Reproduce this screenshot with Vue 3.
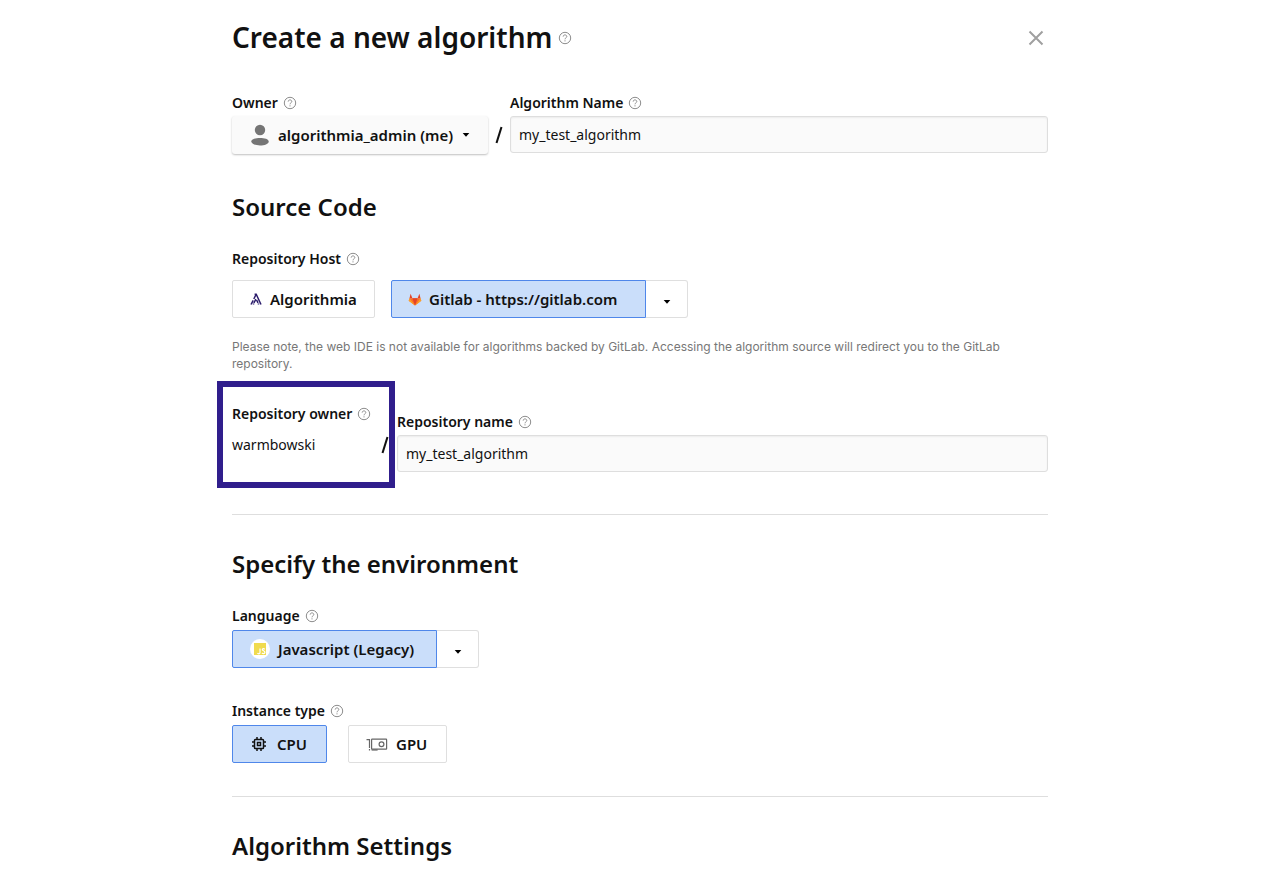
<script setup>
import { h, ref } from 'vue'

const algorithmName = ref('my_test_algorithm')
const repositoryName = ref('my_test_algorithm')
const host = ref('gitlab')
const instance = ref('cpu')

const HelpIcon = () =>
  h('svg', { viewBox: '0 0 14 14', width: 14, height: 14, fill: 'none', stroke: '#8d8d8d', 'stroke-width': 1, 'aria-hidden': 'true' }, [
    h('circle', { cx: 7, cy: 7, r: 5.7 }),
    h('path', { d: 'M5.2 5.6C5.2 4.5 6 3.9 7 3.9s1.8.7 1.8 1.6c0 1.3-1.8 1.3-1.8 2.8' }),
    h('path', { d: 'M7 9.3v1.1' })
  ])

const Caret = () =>
  h('svg', { viewBox: '0 0 8 4', width: 8, height: 4, 'aria-hidden': 'true' }, [
    h('path', { d: 'M.7 0h6.6L4 3.8z', fill: '#000' })
  ])
</script>

<template>
  <main class="page">
    <form class="form" @submit.prevent>
      <header class="header">
        <h1>Create a new algorithm</h1>
        <button type="button" class="help" aria-label="About algorithms"><HelpIcon /></button>
        <button type="button" class="close" aria-label="Close">
          <svg viewBox="0 0 16 16" width="16" height="16" fill="none" stroke="#a0a0a0" stroke-width="2">
            <path d="M1.5 1.5l13 13M14.5 1.5l-13 13" />
          </svg>
        </button>
      </header>

      <div class="row identity">
        <div class="field">
          <div class="caption">
            <label for="owner">Owner</label>
            <button type="button" class="help" aria-label="About owner"><HelpIcon /></button>
          </div>
          <button id="owner" type="button" class="owner">
            <svg viewBox="0 0 18 22" width="18" height="22" fill="#757575">
              <circle cx="9" cy="6" r="5.2" />
              <path d="M.3 17.5C.3 15 4.6 14 9 14s8.7 1 8.7 3.5S13.4 21.500 9 21.500.3 19.800.3 17.500z" />
            </svg>
            <span>algorithmia_admin (me)</span>
            <Caret />
          </button>
        </div>
        <svg class="slash" viewBox="0 0 8 18" width="8" height="18" fill="none" stroke="#111" stroke-width="2" aria-hidden="true">
          <path d="M6.5 1L1.5 17" />
        </svg>
        <div class="field grow">
          <div class="caption">
            <label for="algorithm-name">Algorithm Name</label>
            <button type="button" class="help" aria-label="About algorithm name"><HelpIcon /></button>
          </div>
          <input id="algorithm-name" v-model="algorithmName" type="text">
        </div>
      </div>

      <h2>Source Code</h2>
      <div class="caption">
        <span id="host-label">Repository Host</span>
        <button type="button" class="help" aria-label="About repository host"><HelpIcon /></button>
      </div>
      <div class="choices hosts" role="group" aria-labelledby="host-label">
        <button type="button" class="choice algorithmia" :class="{ selected: host === 'algorithmia' }" @click="host = 'algorithmia'">
          <svg viewBox="0 0 12 12" width="12" height="12" fill="none" stroke="#2b1c6b" stroke-width="1.5">
            <path d="M4.600 1.200h1.600L11 11.500M6 1.500L3.800 6M3.200 7.300L1 11.500M5.900 6.200L3.900 10M6.600 7L8 9.800M8.500 10.600v1M3.500 10.600v1" />
          </svg>
          <span>Algorithmia</span>
        </button>
        <div class="split">
          <button type="button" class="choice gitlab" :class="{ selected: host === 'gitlab' }" @click="host = 'gitlab'">
            <svg viewBox="0 0 14 13" width="14" height="13">
              <path d="M7 12.500L.7 7.800 1.500 5.300h11l.8 2.500z" fill="#fc6d26" />
              <path d="M.7 7.800l.8-2.500L7 12.500zM13.300 7.800l-.8-2.500L7 12.500z" fill="#fca326" />
              <path d="M1.500 5.300L2.600.8l1.800 4.500zM12.500 5.300L11.400.8 9.600 5.300zM4.400 5.300h5.200L7 12.500z" fill="#e24329" />
            </svg>
            <span>Gitlab - https://gitlab.com</span>
          </button>
          <button type="button" class="more" aria-label="Choose repository host"><Caret /></button>
        </div>
      </div>
      <p class="note">
        Please note, the web IDE is not available for algorithms backed by GitLab. Accessing the algorithm source will redirect you to the GitLab repository.
      </p>

      <div class="row repository">
        <div class="repo-owner">
          <div class="caption">
            <span>Repository owner</span>
            <button type="button" class="help" aria-label="About repository owner"><HelpIcon /></button>
          </div>
          <div class="owner-line">
            <span>warmbowski</span>
            <svg viewBox="0 0 8 18" width="8" height="18" fill="none" stroke="#111" stroke-width="2" aria-hidden="true">
              <path d="M6.5 1L1.5 17" />
            </svg>
          </div>
          <div class="highlight"></div>
        </div>
        <div class="field grow repo-name">
          <div class="caption">
            <label for="repository-name">Repository name</label>
            <button type="button" class="help" aria-label="About repository name"><HelpIcon /></button>
          </div>
          <input id="repository-name" v-model="repositoryName" type="text">
        </div>
      </div>

      <hr>
      <h2>Specify the environment</h2>
      <div class="caption">
        <label for="language">Language</label>
        <button type="button" class="help" aria-label="About language"><HelpIcon /></button>
      </div>
      <div class="split">
        <button id="language" type="button" class="choice language selected">
          <svg viewBox="0 0 20 20" width="20" height="20">
            <circle cx="10" cy="10" r="10" fill="#fff" />
            <path d="M4 4h12v12H4z" fill="#f0db4f" />
            <path d="M10 9.500v4q0 1.300-1.200 1.300-.9 0-1.300-.8M14.700 10.300q-.5-.7-1.300-.7-1.100 0-1.100 1c0 1.400 2.600.9 2.600 2.700q0 1.400-1.400 1.400-1 0-1.600-.8" fill="none" stroke="#fff" stroke-width="1.2" />
          </svg>
          <span>Javascript (Legacy)</span>
        </button>
        <button type="button" class="more" aria-label="Choose language"><Caret /></button>
      </div>

      <div class="caption instance-caption">
        <span id="instance-label">Instance type</span>
        <button type="button" class="help" aria-label="About instance type"><HelpIcon /></button>
      </div>
      <div class="choices instances" role="group" aria-labelledby="instance-label">
        <button type="button" class="choice cpu" :class="{ selected: instance === 'cpu' }" @click="instance = 'cpu'">
          <svg viewBox="0 0 14 14" width="14" height="14" fill="none" stroke="#111" stroke-width="1.5">
            <rect x="2.5" y="2.5" width="9" height="9" rx=".8" />
            <path d="M5.500 5.500h3v3h-3zM5 0v2.500M9 0v2.500M5 11.500V14M9 11.500V14M0 5h2.500M0 9h2.500M11.500 5H14M11.500 9H14" />
          </svg>
          <span>CPU</span>
        </button>
        <button type="button" class="choice gpu" :class="{ selected: instance === 'gpu' }" @click="instance = 'gpu'">
          <svg viewBox="0 0 22 14" width="22" height="14" fill="none" stroke="#666" stroke-width="1.2">
            <path d="M.5 2.600h3V11M3.500 12v1.500" />
            <rect x="5.6" y="2.2" width="15" height="10" rx=".5" />
            <circle cx="15.5" cy="7.2" r="2.4" />
            <path d="M5.600 13h6" />
          </svg>
          <span>GPU</span>
        </button>
      </div>

      <hr>
      <h2>Algorithm Settings</h2>
    </form>
  </main>
</template>

<style>
body {
  margin: 0;
  background: #fff;
}
</style>

<style scoped>
.page {
  box-sizing: border-box;
  min-height: 100vh;
  padding: 20px 24px;
  color: #111;
  font-family: "Noto Sans", "Open Sans", sans-serif;
  font-size: 14px;
  line-height: 20px;
}
.form {
  max-width: 816px;
  margin: 0 auto;
}
.page svg {
  display: block;
  flex: none;
}
button, input {
  box-sizing: border-box;
  font: inherit;
  color: inherit;
}
button {
  padding: 0;
  border: 0;
  background: none;
  white-space: nowrap;
  cursor: pointer;
}
.header {
  display: flex;
  align-items: center;
  height: 36px;
}
h1 {
  margin: 0 6px 0 0;
  font-size: 28px;
  line-height: 34px;
  padding-bottom: 2px;
  font-weight: 600;
}
h2 {
  margin: 0;
  font-size: 24px;
  line-height: 32px;
  font-weight: 600;
}
.close {
  margin-left: auto;
  padding: 4px;
}
.caption {
  display: flex;
  align-items: center;
  gap: 5px;
  font-weight: 600;
}
.row {
  display: flex;
}
.grow {
  flex: 1;
  min-width: 0;
}
.identity {
  margin: 37px 0;
}
.owner {
  display: flex;
  align-items: center;
  gap: 9px;
  width: 256px;
  height: 38px;
  margin-top: 3px;
  padding: 0 16px 0 19px;
  border-radius: 3px;
  background: #fafafa;
  box-shadow: 0 1px 2px rgba(0, 0, 0, 0.25);
  font-size: 15px;
  font-weight: 600;
}
.slash {
  margin: 33px 7px 0;
}
input {
  display: block;
  width: 100%;
  height: 37px;
  margin-top: 3px;
  padding: 0 8px;
  border: 1px solid #dedede;
  border-radius: 3px;
  background: #fafafa;
  box-shadow: inset 0 1px 2px rgba(0, 0, 0, 0.06);
}
h2 + .caption {
  margin-top: 26px;
}
.choices {
  display: flex;
}
.hosts {
  gap: 16px;
  margin-top: 11px;
}
.choice {
  display: flex;
  align-items: center;
  height: 38px;
  padding: 0 17px;
  border: 1px solid #dfdfdf;
  border-radius: 2px;
  font-size: 15px;
  font-weight: 600;
}
.selected {
  border-color: #4f87ea;
  background: #cadefa;
}
.algorithmia {
  width: 143px;
  gap: 8px;
}
.gitlab {
  width: 255px;
  padding: 0 16px;
  gap: 7px;
}
.split {
  display: flex;
  margin-top: 4px;
}
.hosts .split {
  margin-top: 0;
}
.split .choice {
  border-radius: 2px 0 0 2px;
}
.more {
  display: flex;
  align-items: center;
  justify-content: center;
  width: 42px;
  height: 38px;
  padding-top: 6px;
  border: 1px solid #dfdfdf;
  border-left: 0;
  border-radius: 0 3px 3px 0;
}
.note {
  margin: 20px 0 0;
  color: #777;
  font-family: Inter, sans-serif;
  font-size: 12px;
  line-height: 17px;
}
.repository {
  margin: 32px 0 42px;
}
.repo-owner {
  position: relative;
  width: 165px;
}
.owner-line {
  display: flex;
  align-items: center;
  justify-content: space-between;
  margin-top: 11px;
  padding-right: 8px;
}
.highlight {
  position: absolute;
  inset: -23px 2px auto -15px;
  box-sizing: border-box;
  height: 107px;
  border: 6px solid #301e8c;
  pointer-events: none;
}
.repo-name {
  margin-top: 8px;
}
hr {
  height: 1px;
  margin: 0 0 33px;
  border: 0;
  background: #dedede;
}
.language {
  width: 205px;
  gap: 8px;
}
.instance-caption {
  margin-top: 33px;
}
.instances {
  gap: 21px;
  margin: 4px 0 33px;
}
.cpu {
  width: 95px;
  padding: 0 19px;
  gap: 11px;
}
.gpu {
  width: 99px;
  gap: 8px;
}
</style>
